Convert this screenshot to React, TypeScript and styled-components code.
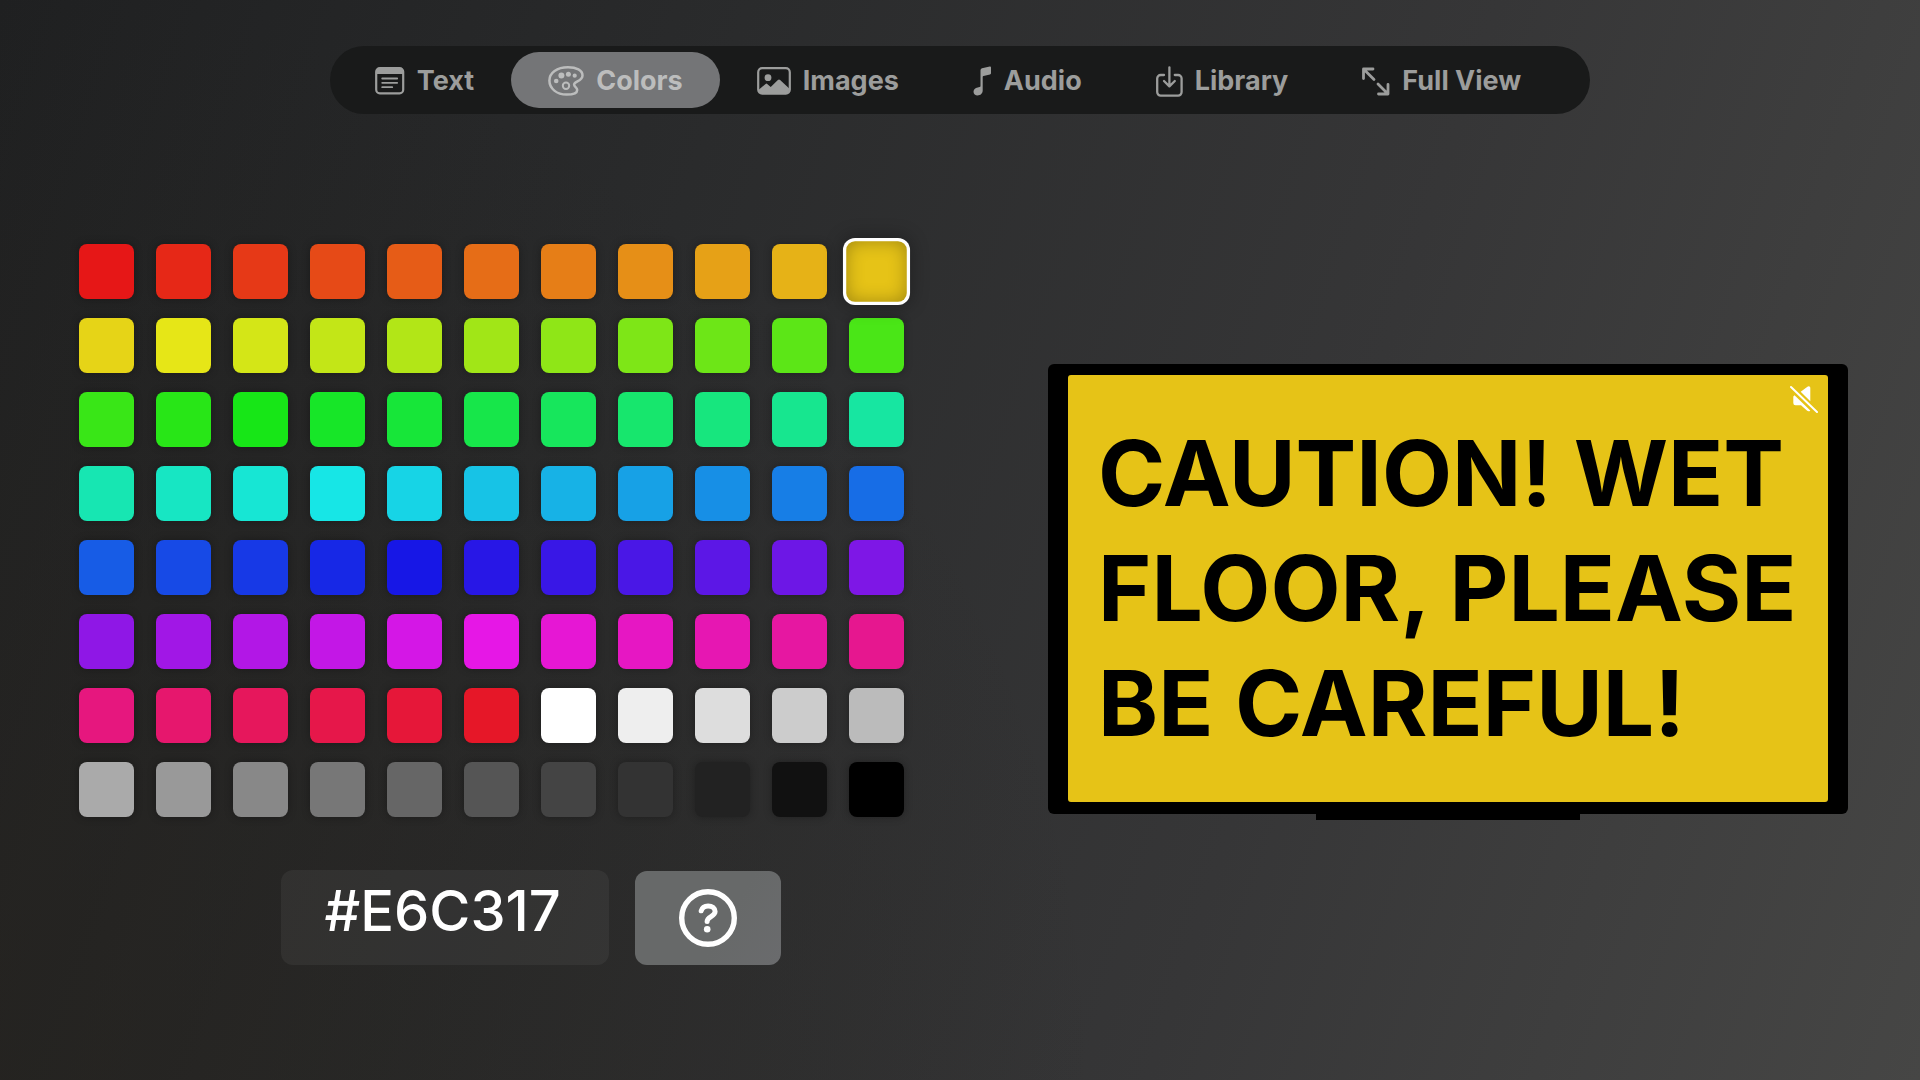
import React, { useState } from "react";
import styled, { createGlobalStyle, css } from "styled-components";

const GlobalStyle = createGlobalStyle`
  *, *::before, *::after { box-sizing: border-box; }
  html, body { margin: 0; }
  body {
    background: #303031;
    color: #fff;
    font-family: Inter, "Liberation Sans", sans-serif;
  }
  button, input { font-family: inherit; }
`;

const Page = styled.div`
  min-height: 100vh;
  padding: 46px 72px 0 79px;
  display: flex;
  flex-direction: column;
  align-items: stretch;
  background:
    radial-gradient(circle at 0% 100%, rgba(37, 34, 29, 0.6), rgba(37, 34, 29, 0) 50%),
    linear-gradient(108deg, #1f2021 0%, #2a2b2c 33%, #363637 66%, #464645 100%);
`;

const TabBar = styled.nav`
  align-self: center;
  display: flex;
  height: 68px;
  padding: 6px 32px 6px 8px;
  margin-left: -7px;
  border-radius: 34px;
  background: #191a1a;
`;

const Tab = styled.button<{ $active: boolean }>`
  display: flex;
  align-items: center;
  gap: 12px;
  padding: 2px 37px 0;
  border: 0;
  border-radius: 28px;
  background: ${(p) => (p.$active ? "#747577" : "transparent")};
  color: ${(p) => (p.$active ? "#bcbdbd" : "#9c9d9c")};
  font-size: 27px;
  font-weight: 700;
  line-height: 34px;
  white-space: nowrap;
  cursor: pointer;

  svg { display: block; flex: none; }
`;

const Main = styled.main`
  display: flex;
  justify-content: space-between;
  align-items: flex-start;
  padding-top: 130px;
`;

const Picker = styled.section`
  display: flex;
  flex-direction: column;
  align-items: center;
  gap: 53px;
`;

const Palette = styled.div`
  display: grid;
  grid-template-columns: repeat(11, 55px);
  gap: 19px 22px;
`;

const Swatch = styled.button<{ $color: string; $selected: boolean }>`
  height: 55px;
  padding: 0;
  border: 0;
  border-radius: 8px;
  background: ${(p) => p.$color};
  box-shadow: 0 0 8px rgba(0, 0, 0, 0.3);
  cursor: pointer;
  ${(p) =>
    p.$selected &&
    css`
      transform: scale(1.1);
      box-shadow:
        0 0 0 3px #fff,
        0 0 16px 4px rgba(0, 0, 0, 0.3),
        inset 0 0 16px rgba(0, 0, 0, 0.3);
    `}
`;

const HexRow = styled.div`
  display: flex;
  align-items: center;
  gap: 26px;
  padding-left: 78px;
`;

const HexInput = styled.input`
  width: 328px;
  height: 95px;
  padding: 0 44px 14px;
  border: 0;
  border-radius: 12px;
  outline: none;
  background: rgba(255, 255, 255, 0.05);
  color: #fff;
  font-size: 56px;
  font-weight: 500;
`;

const HelpButton = styled.button`
  display: grid;
  place-items: center;
  width: 146px;
  height: 94px;
  padding: 0;
  border: 0;
  border-radius: 12px;
  background: linear-gradient(120deg, #676969 60%, #6a6b6d);
  color: #fff;
  cursor: pointer;
`;

const Preview = styled.section`
  display: flex;
  flex-direction: column;
  align-items: center;
  padding-top: 120px;
`;

const Bezel = styled.div`
  width: 800px;
  padding: 11px 20px 12px;
  border-radius: 6px;
  background: #000;
`;

const Screen = styled.div<{ $color: string }>`
  position: relative;
  display: flex;
  align-items: center;
  height: 427px;
  padding: 0 30px;
  border-radius: 3px;
  background: ${(p) => p.$color};
`;

const Message = styled.p`
  margin: 0;
  color: #000;
  font-size: 91px;
  font-weight: 700;
  line-height: 115px;
`;

const Line = styled.span`
  display: block;
  white-space: nowrap;
`;

const MuteBadge = styled.svg`
  position: absolute;
  top: 10px;
  right: 10px;
`;

const Stand = styled.div`
  width: 264px;
  height: 6px;
  background: #000;
`;

const TextIcon = () => (
  <svg width="30" height="28" viewBox="0 0 30 28" fill="none" stroke="currentColor" aria-hidden="true">
    <rect x="1.2" y="1.2" width="27" height="25.2" rx="3.6" strokeWidth="2.2" />
    <path d="M1.2 7V4.5a3.4 3.4 0 0 1 3.4-3.4h20.2a3.4 3.4 0 0 1 3.4 3.4V7z" fill="currentColor" stroke="none" />
    <path d="M7.2 11.5h15M7.2 15.8h15M7.2 20.2h10" strokeWidth="1.8" strokeLinecap="round" />
  </svg>
);

const PaletteIcon = () => (
  <svg width="36" height="30" viewBox="0 0 36 30" fill="none" stroke="currentColor" aria-hidden="true">
    <path
      d="M20 1.300C9 1.300 1.400 6.800 1.400 14.600c0 8 7.400 14 17.200 14 6.400 0 10.600-1.500 10.600-4.600 0-2.500-3.100-3.100-3.100-5.400 0-3.400 8.400-3.300 8.400-9.200C34.500 4.300 28.500 1.300 20 1.300z"
      strokeWidth="2.500"
      strokeLinejoin="round"
    />
    <g fill="currentColor" stroke="none">
      <circle cx="8.200" cy="15" r="2.300" />
      <circle cx="13.400" cy="9.600" r="3" />
      <circle cx="20.400" cy="8.200" r="2.500" />
      <circle cx="26.700" cy="9.700" r="2.100" />
    </g>
    <circle cx="18" cy="19.700" r="3.200" strokeWidth="2" />
  </svg>
);

const ImageIcon = () => (
  <svg width="34" height="28" viewBox="0 0 34 28" fill="none" stroke="currentColor" aria-hidden="true">
    <rect x="1.200" y="1.200" width="31.600" height="25.400" rx="4" strokeWidth="2.200" />
    <circle cx="11" cy="10.700" r="3.400" fill="currentColor" stroke="none" />
    <path
      d="M2 22.500l6.600-5.600q.8-.7 1.600 0l3.500 3 7.200-6.800q1.100-1 2.200 0L32 21.300v2.200a3 3 0 0 1-3 3H5a3 3 0 0 1-3-3z"
      fill="currentColor"
      stroke="none"
    />
  </svg>
);

const NoteIcon = () => (
  <svg width="19" height="30" viewBox="0 0 19 30" fill="currentColor" aria-hidden="true">
    <path d="M18 1.600v5.600q0 1-1 1.200l-6.500 1.500q-.8.200-.8 1v13.600c0 3-2.200 4.900-5.100 4.900C2.300 29.400.5 28 .5 25.700c0-2.300 1.700-3.700 4.200-4.200l1.800-.4q1-.2 1-1.200V4.200q0-1.600 1.500-2L16.800.500Q18 .300 18 1.600z" />
  </svg>
);

const LibraryIcon = () => (
  <svg
    width="27"
    height="31"
    viewBox="0 0 27 31"
    fill="none"
    stroke="currentColor"
    strokeWidth="2.300"
    strokeLinecap="round"
    strokeLinejoin="round"
    aria-hidden="true"
  >
    <path d="M8 9H4.700a3.500 3.500 0 0 0-3.500 3.500v13.600a3.500 3.500 0 0 0 3.500 3.500h17.400a3.500 3.500 0 0 0 3.500-3.500V12.500A3.500 3.500 0 0 0 22.100 9H18.800" />
    <path d="M13.400 1.300V20M8 15l5.400 5.400L18.800 15" />
  </svg>
);

const ExpandIcon = () => (
  <svg
    width="28"
    height="29"
    viewBox="0 0 28 29"
    fill="none"
    stroke="currentColor"
    strokeWidth="2.800"
    strokeLinecap="round"
    strokeLinejoin="round"
    aria-hidden="true"
  >
    <path d="M1.500 11.500V2h9.500M2 2.500l10 10M26 17.500V27H16.500M25.500 26.500L16 17" />
  </svg>
);

const HelpIcon = () => (
  <svg width="60" height="60" viewBox="0 0 60 60" fill="none" stroke="currentColor" aria-hidden="true">
    <circle cx="30" cy="30" r="26.300" strokeWidth="5.400" />
    <path
      d="M23.200 22.800c.9-3.300 3.500-4.900 6.900-4.900 4 0 7 2.200 7 5.700 0 5.200-8 5-8 10"
      strokeWidth="5"
      strokeLinecap="round"
    />
    <circle cx="29.200" cy="41.300" r="3.300" fill="currentColor" stroke="none" />
  </svg>
);

const tabs = [
  { label: "Text", Icon: TextIcon },
  { label: "Colors", Icon: PaletteIcon },
  { label: "Images", Icon: ImageIcon },
  { label: "Audio", Icon: NoteIcon },
  { label: "Library", Icon: LibraryIcon },
  { label: "Full View", Icon: ExpandIcon },
];

const HUE_COUNT = 72;

const toHex = (channels: number[]) =>
  "#" + channels.map((c) => Math.floor(c + 0.001).toString(16).padStart(2, "0")).join("").toUpperCase();

const hueToHex = (hue: number) => {
  const high = 230;
  const low = 23;
  const channel = (n: number) => {
    const k = (n + hue / 60) % 6;
    return high - (high - low) * Math.max(0, Math.min(k, 4 - k, 1));
  };
  return toHex([channel(5), channel(3), channel(1)]);
};

const hues = Array.from({ length: HUE_COUNT }, (_, i) => hueToHex((i * 360) / HUE_COUNT));
const grays = Array.from({ length: 16 }, (_, i) => toHex(Array(3).fill(255 - i * 17)));
const colors = [...hues, ...grays];

export default function App() {
  const [activeTab, setActiveTab] = useState("Colors");
  const [color, setColor] = useState(colors[10]);

  return (
    <>
      <GlobalStyle />
      <Page>
        <TabBar aria-label="Editor sections">
          {tabs.map(({ label, Icon }) => (
            <Tab
              key={label}
              type="button"
              $active={label === activeTab}
              aria-current={label === activeTab ? "page" : undefined}
              onClick={() => setActiveTab(label)}
            >
              <Icon />
              {label}
            </Tab>
          ))}
        </TabBar>
        <Main>
          <Picker>
            <Palette>
              {colors.map((c) => (
                <Swatch
                  key={c}
                  type="button"
                  aria-label={c}
                  aria-pressed={c === color}
                  $color={c}
                  $selected={c === color}
                  onClick={() => setColor(c)}
                />
              ))}
            </Palette>
            <HexRow>
              <HexInput aria-label="Hex color" value={color} onChange={(e) => setColor(e.target.value)} />
              <HelpButton type="button" aria-label="Help">
                <HelpIcon />
              </HelpButton>
            </HexRow>
          </Picker>
          <Preview aria-label="Preview">
            <Bezel>
              <Screen $color={color}>
                <Message>
                  <Line>CAUTION! WET</Line>
                  <Line>FLOOR, PLEASE</Line>
                  <Line>BE CAREFUL!</Line>
                </Message>
                <MuteBadge width="28" height="28" viewBox="0 0 28 28" fill="#fff" aria-hidden="true">
                  <path d="M20.300 2.800v13.400l-9.600-9.400 6.400-4.900q.7-.6 1.700-.6 1.500 0 1.500 1.500z" />
                  <path d="M4.500 10.200L20.300 25.400q-.6.900-1.800.9-.8 0-1.600-.7L11 20.300H5.500q-2.200 0-2.200-2.200V11.500z" />
                  <path d="M1.500 2.500l25 24" stroke={color} strokeWidth="4.500" />
                  <path d="M1 2l26 25" stroke="#fff" strokeWidth="2" strokeLinecap="round" />
                </MuteBadge>
              </Screen>
            </Bezel>
            <Stand />
          </Preview>
        </Main>
      </Page>
    </>
  );
}
